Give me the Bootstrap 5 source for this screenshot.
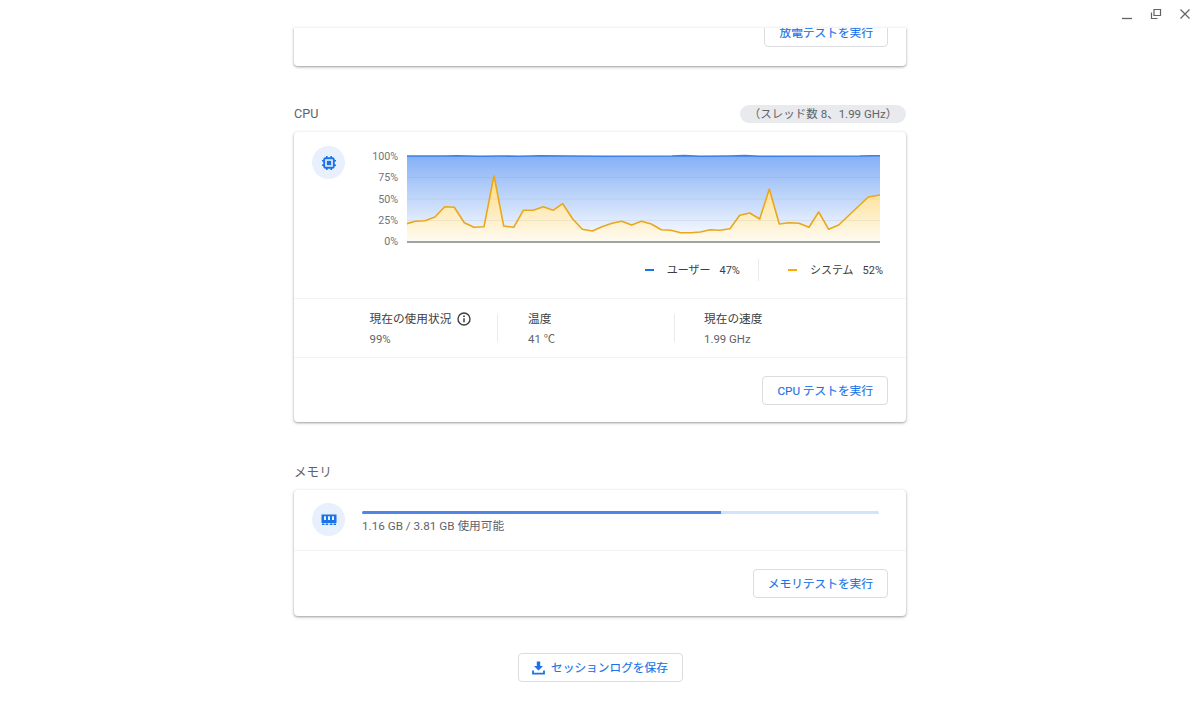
<!DOCTYPE html>
<html lang="ja">
<head>
<meta charset="utf-8">
<title>診断</title>
<link href="https://cdn.jsdelivr.net/npm/bootstrap@5.3.0/dist/css/bootstrap.min.css" rel="stylesheet">
<style>
html, body { height: 707px; overflow: hidden; background: #fff; }
body { font-family: Roboto, "Noto Sans CJK JP", sans-serif; font-size: 11.7px; color: #5f6368; }
.titlebar { height: 28px; padding-right: 9px; gap: 17px; padding-top: 8px; }
.titlebar svg { display: block; }
.diag-col { width: 612px; }
.diag-card { border: 0; border-radius: 4px; box-shadow: 0 1px 2px rgba(60,64,67,.35), 0 1px 3px 1px rgba(60,64,67,.14); background: #fff; }
.diag-card.clip-top { height: 38px; overflow: hidden; border-radius: 0 0 4px 4px; margin-top: 0; padding-right: 18px; }
.clip-top .diag-btn { margin-top: -10px; }
.diag-btn { height: 29px; padding: 0 14px; font-size: 11.7px; font-weight: 400; color: #1a73e8; background: #fff; border: 1px solid #dadce0; border-radius: 4px; line-height: 28px; white-space: nowrap; -webkit-text-stroke: .15px #1a73e8; }
.diag-btn:hover { color: #1a73e8; background: #fff; border-color: #dadce0; }
.sec-head { height: 18px; font-size: 12.6px; color: #5f6368; line-height: 18px; }
.head-cpu { margin-top: 39px; margin-bottom: 9px; }
.head-mem { margin-top: 40px; margin-bottom: 10px; line-height: 20px; }
.pill-info { height: 18px; width: 166px; background: #e8eaed; border-radius: 9px; font-size: 11.5px; line-height: 18px; text-align: center; color: #5f6368; }
.icon-disc { width: 33px; height: 33px; border-radius: 50%; background: #e8f0fe; flex: none; margin-left: 18px; }
.chart-sec { height: 167px; padding-top: 14px; border-bottom: 1px solid #f1f3f4; }
.chart-main { padding-top: 3px; min-width: 0; }
.axis-col { width: 53px; height: 100px; font-size: 10.7px; color: #70757a; text-align: right; padding-top: 1px; }
.axis-col span { height: 14px; line-height: 14px; display: block; }
.chart-svg { margin-left: 9px; display: block; }
.legend-row { height: 22px; margin-top: 10px; padding-right: 23px; font-size: 11px; color: #3c4043; line-height: 20px; }
.leg-txt { padding-top: 2px; }
.dash { width: 9px; height: 2px; margin-right: 13px; }
.dash-user { background: #1a73e8; }
.dash-sys { background: #f9ab00; }
.leg-val { margin-left: 9px; }
.leg-sep { width: 1px; height: 22px; background: #e8eaed; margin: 0 29px 0 18px; }
.stat-row { height: 59px; padding-left: 75.5px; padding-top: 1px; border-bottom: 1px solid #f1f3f4; }
.stat-a { width: 127.5px; }
.stat-b { width: 146px; margin-left: 30px; }
.stat-c { margin-left: 29px; }
.stat-name { color: #3c4043; line-height: 18px; height: 18px; gap: 6px; }
.stat-val { color: #5f6368; line-height: 18px; height: 18px; margin-top: 2px; font-size: 11.4px; }
.stat-sep { width: 1px; height: 28px; background: #e8eaed; flex: none; margin-top: -1px; }
.card-foot { height: 64px; padding: 18px 18px 0 0; }
.mem-sec { height: 61px; border-bottom: 1px solid #f1f3f4; padding-top: 13px; }
.mem-main { margin-left: 17px; margin-right: 27px; padding-top: 8px; }
.mem-track { height: 3px; background: #d2e3fc; border-radius: 2px; }
.mem-track .progress-bar { background: #4f86e7; }
.mem-text { line-height: 18px; margin-top: 3px; font-size: 11.7px; }
.mem-foot { height: 65px; }
.save-wrap { margin-top: 37px; }
.save-btn { width: 165px; gap: 6px; padding: 0; }
.save-btn span { padding-top: 1px; }
</style>
</head>
<body>
<div class="titlebar d-flex justify-content-end">
  <svg width="12" height="12" viewBox="0 0 12 12"><path d="M1 10.5H11" stroke="#5f6368" stroke-width="1.3" fill="none"/></svg>
  <svg width="12" height="12" viewBox="0 0 12 12"><path d="M4 1.5H10.5V7.5H4Z M1.5 4.5V10.5H7.5" stroke="#5f6368" stroke-width="1.2" fill="none"/></svg>
  <svg width="12" height="12" viewBox="0 0 12 12"><path d="M1.5 1.5L10.5 10.5M10.5 1.5L1.5 10.5" stroke="#5f6368" stroke-width="1.2" fill="none"/></svg>
</div>

<main class="diag-col mx-auto">
  <div class="card diag-card clip-top d-flex flex-row justify-content-end align-items-start">
    <button type="button" class="btn diag-btn">放電テストを実行</button>
  </div>

  <div class="d-flex justify-content-between align-items-center head-cpu">
    <div class="sec-head">CPU</div>
    <div class="pill-info">（スレッド数 8、1.99 GHz）</div>
  </div>

  <section class="card diag-card">
    <div class="chart-sec d-flex">
      <div class="icon-disc d-flex align-items-center justify-content-center">
        <svg width="16" height="16" viewBox="0 0 16 16">
          <rect x="3.2" y="3.2" width="9.6" height="9.6" rx="1.4" fill="none" stroke="#1a73e8" stroke-width="1.9"/>
          <rect x="5.8" y="5.8" width="4.4" height="4.4" fill="#1a73e8"/>
          <path d="M5.8 1V3M10.2 1V3M5.8 13V15M10.2 13V15M1 5.8H3M1 10.2H3M13 5.8H15M13 10.2H15" stroke="#1a73e8" stroke-width="1.6" fill="none"/>
        </svg>
      </div>
      <div class="chart-main flex-grow-1">
        <div class="d-flex">
          <div class="axis-col d-flex flex-column justify-content-between flex-shrink-0">
            <span>100%</span><span>75%</span><span>50%</span><span>25%</span><span>0%</span>
          </div>
          <svg class="chart-svg" width="473" height="100" viewBox="407 149 473 100">
            <defs>
              <linearGradient id="gradUser" x1="0" y1="0" x2="0" y2="1">
                <stop offset="0" stop-color="#85b0f6"/>
                <stop offset="1" stop-color="#ffffff"/>
              </linearGradient>
              <linearGradient id="gradSys" gradientUnits="userSpaceOnUse" x1="0" y1="175" x2="0" y2="242">
                <stop offset="0" stop-color="#fdd978"/>
                <stop offset=".35" stop-color="#fee5a6"/>
                <stop offset="1" stop-color="#fffbf2"/>
              </linearGradient>
            </defs>
            <rect x="407" y="156" width="473" height="86" fill="url(#gradUser)"/>
            <polygon fill="url(#gradSys)" points="407,242 407,223.7 415.3,221.3 425,220.7 435,217 444.7,206.7 454.3,207.3 464.3,222.7 474,227.3 484,226.7 494,175.7 503.7,226 513.7,227.3 523.3,210.3 533.3,210.3 543.3,206.7 553,210.3 562.7,203.7 572.7,219 582.3,229.3 592.3,231 602,226.7 612,223.3 621.7,221.3 631.7,225 641.3,221.3 651.3,224 661.3,229.7 671,230.3 680.7,232.7 690.7,232.7 700.3,232 710.3,229.7 720,230.3 730,228.7 739.7,215.3 749.7,213 759.7,219 769.3,189 779.3,224 789,222.7 799,223.3 809,227.3 818.7,212 828.7,229.3 838.7,225 868.3,197 880,195 880,242"/>
            <path d="M407 177.5H880M407 199H880M407 220.5H880" stroke="#5f6368" stroke-opacity=".09" stroke-width="1" fill="none"/>
            <polyline fill="none" stroke="#3b80e6" stroke-width="1.6" points="407,156 445,156 457,155.8 480,156.2 500,156 520,156.2 540,155.8 600,156.2 672,156 684,155.6 700,156.2 730,156 745,155.6 760,156.2 860,156 872,155.7 880,155.7"/>
            <polyline fill="none" stroke="#eaa71a" stroke-width="1.6" stroke-linejoin="round" points="407,223.7 415.3,221.3 425,220.7 435,217 444.7,206.7 454.3,207.3 464.3,222.7 474,227.3 484,226.7 494,175.7 503.7,226 513.7,227.3 523.3,210.3 533.3,210.3 543.3,206.7 553,210.3 562.7,203.7 572.7,219 582.3,229.3 592.3,231 602,226.7 612,223.3 621.7,221.3 631.7,225 641.3,221.3 651.3,224 661.3,229.7 671,230.3 680.7,232.7 690.7,232.7 700.3,232 710.3,229.7 720,230.3 730,228.7 739.7,215.3 749.7,213 759.7,219 769.3,189 779.3,224 789,222.7 799,223.3 809,227.3 818.7,212 828.7,229.3 838.7,225 868.3,197 880,195"/>
            <path d="M407 242H880" stroke="#80868b" stroke-width="1.4" fill="none"/>
          </svg>
        </div>
        <div class="legend-row d-flex justify-content-end align-items-center">
          <span class="dash dash-user"></span><span class="leg-txt">ユーザー</span><span class="leg-txt leg-val">47%</span>
          <span class="leg-sep"></span>
          <span class="dash dash-sys"></span><span class="leg-txt">システム</span><span class="leg-txt leg-val">52%</span>
        </div>
      </div>
    </div>

    <div class="stat-row d-flex align-items-center">
      <div class="stat-a">
        <div class="stat-name d-flex align-items-center">現在の使用状況
          <svg width="14" height="14" viewBox="0 0 14 14"><circle cx="7" cy="7" r="6" fill="none" stroke="#3c4043" stroke-width="1.4"/><path d="M7 6.2V10.2" stroke="#3c4043" stroke-width="1.5"/><circle cx="7" cy="4.2" r=".9" fill="#3c4043"/></svg>
        </div>
        <div class="stat-val">99%</div>
      </div>
      <div class="stat-sep"></div>
      <div class="stat-b">
        <div class="stat-name">温度</div>
        <div class="stat-val">41 ℃</div>
      </div>
      <div class="stat-sep"></div>
      <div class="stat-c">
        <div class="stat-name">現在の速度</div>
        <div class="stat-val">1.99 GHz</div>
      </div>
    </div>

    <div class="card-foot d-flex justify-content-end align-items-start">
      <button type="button" class="btn diag-btn">CPU テストを実行</button>
    </div>
  </section>

  <div class="sec-head head-mem">メモリ</div>

  <section class="card diag-card">
    <div class="mem-sec d-flex">
      <div class="icon-disc d-flex align-items-center justify-content-center">
        <svg width="16" height="12" viewBox="0 0 16 12">
          <path d="M0.5 0.5H15.5V9H0.5Z" fill="#1a73e8"/>
          <path d="M3 2.2H5V6H3ZM7 2.2H9V6H7ZM11 2.2H13V6H11Z" fill="#e8f0fe"/>
          <path d="M1 9.5H3.5V11H1ZM4.6 9.5H7.2V11H4.6ZM8.8 9.5H11.4V11H8.8ZM12.5 9.5H15V11H12.5Z" fill="#1a73e8"/>
        </svg>
      </div>
      <div class="mem-main flex-grow-1">
        <div class="progress mem-track"><div class="progress-bar" role="progressbar" style="width: 69.5%"></div></div>
        <div class="mem-text">1.16 GB / 3.81 GB 使用可能</div>
      </div>
    </div>
    <div class="card-foot mem-foot d-flex justify-content-end align-items-start">
      <button type="button" class="btn diag-btn">メモリテストを実行</button>
    </div>
  </section>

  <div class="save-wrap d-flex justify-content-center">
    <button type="button" class="btn diag-btn save-btn d-flex align-items-center justify-content-center">
      <svg width="13" height="14" viewBox="0 0 13 14"><path d="M4.8 0.5H8.2V5H11L6.5 9.6L2 5H4.8Z" fill="#1a73e8"/><path d="M1 9.5V12.6H12V9.5" fill="none" stroke="#1a73e8" stroke-width="1.8"/></svg>
      <span>セッションログを保存</span>
    </button>
  </div>
</main>
<script src="https://cdn.jsdelivr.net/npm/bootstrap@5.3.0/dist/js/bootstrap.bundle.min.js"></script>
</body>
</html>
